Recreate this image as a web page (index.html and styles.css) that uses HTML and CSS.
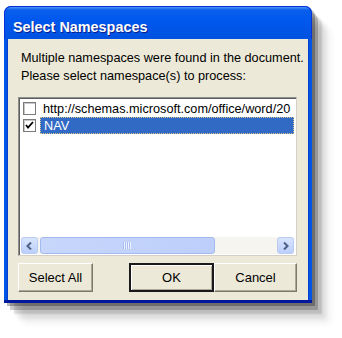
FILE: index.html
```html
<!DOCTYPE html>
<html lang="en">
<head>
<meta charset="UTF-8" />
<title>Select Namespaces</title>
<link rel="stylesheet" href="styles.css">
</head>
<body>

<div class="desk">
  <div class="window">
    <div class="titlebar">Select Namespaces</div>
    <div class="client">
      <p class="message">Multiple namespaces were found in the document.<br>Please select namespace(s) to process:</p>

      <div class="listbox">
        <div class="rows">
          <div class="row">
            <span class="check"></span>
            <span class="label">http://schemas.microsoft.com/office/word/20</span>
          </div>
          <div class="row selected">
            <span class="check checked">
              <svg width="9" height="9" viewBox="0 0 9 9"><path d="M1 4 L3 6.5 L8 1" fill="none" stroke="#000" stroke-width="1.8"/></svg>
            </span>
            <span class="label">NAV</span>
          </div>
        </div>

        <div class="hscroll">
          <div class="sbtn">
            <svg width="7" height="8" viewBox="0 0 7 8"><path d="M5 0.5 L1.5 4 L5 7.5" fill="none" stroke="#4d6185" stroke-width="2"/></svg>
          </div>
          <div class="track">
            <div class="thumb">
              <svg width="9" height="7" viewBox="0 0 9 7"><path d="M0.5 0v7M2.5 0v7M4.5 0v7M6.5 0v7" stroke="#a9bdf0" stroke-width="1"/><path d="M1.5 0v7M3.5 0v7M5.5 0v7M7.5 0v7" stroke="#eef3ff" stroke-width="1"/></svg>
            </div>
          </div>
          <div class="sbtn">
            <svg width="7" height="8" viewBox="0 0 7 8"><path d="M2 0.5 L5.5 4 L2 7.5" fill="none" stroke="#4d6185" stroke-width="2"/></svg>
          </div>
        </div>
      </div>

      <div class="buttons">
        <button class="btn select-all">Select All</button>
        <div class="right">
          <button class="btn ok">OK</button>
          <button class="btn cancel">Cancel</button>
        </div>
      </div>
    </div>
  </div>
</div>

</body>
</html>
```

FILE: styles.css
```css
html, body { margin: 0; background: #fff; font-family: "Liberation Sans", Arial, sans-serif; }
.desk { padding: 6px 0 0 4px; height: 338px; box-sizing: border-box; }

.window {
  width: 308px; height: 297px;
  display: flex; flex-direction: column;
  background: #0055e5; border-radius: 7px 7px 0 0;
  border-bottom: 3px solid #00199c; box-sizing: border-box;
  box-shadow:
    3px 3px 0 0 rgba(0,0,0,0.28),
    6px 7px 0 0 rgba(0,0,0,0.2),
    10px 11px 2px 0 rgba(0,0,0,0.14),
    14px 16px 4px 0 rgba(0,0,0,0.09),
    19px 21px 6px 0 rgba(0,0,0,0.05);
}
.titlebar {
  height: 33px; box-sizing: border-box; padding: 12px 0 0 8px;
  border-radius: 7px 7px 0 0;
  background: linear-gradient(#4a95f8 0, #0a5eea 3px, #0058ee 40%, #0052e0 100%);
  border: 1px solid #0831d9; border-bottom: none;
  color: #fff; font-weight: bold; font-size: 14.4px; line-height: 16px;
  text-shadow: 1px 1px 0 #0a1e8a;
}
.client {
  flex: 1; margin: 0 3px; background: #ece9d8;
  padding: 10px 11px 0 10px; display: flex; flex-direction: column;
  border-left: 1px solid #0a3ccf; border-right: 1px solid #0a3ccf;
}
.message {
  margin: 0 -11px 12px 3px; font-size: 12.7px; line-height: 18px; color: #000; white-space: nowrap;
}

.listbox {
  height: 159px; box-sizing: border-box; background: #fff;
  border: 1px solid #8e8f8f; border-right-color: #d4d0c8; border-bottom-color: #d4d0c8;
  box-shadow: inset 1px 1px 0 #5e5e5e;
  display: flex; flex-direction: column; padding: 2px 2px 1px 2px;
}
.rows { flex: 1; overflow: hidden; }
.row { height: 17px; display: flex; align-items: center; white-space: nowrap; font-size: 13px; }
.check {
  width: 11px; height: 11px; border: 1px solid #7b7b7b; background: #fff;
  margin: 0 4px 0 2px; flex: none; display: flex; align-items: center; justify-content: center;
  box-shadow: inset 1px 1px 0 #c8c8c8;
}
.label { padding: 0 3px; line-height: 16px; font-size: 12.7px; }
.row.selected .label {
  flex: 1; background: #316ac5; color: #fff; border: 1px dotted #d8c890; box-sizing: border-box; height: 17px;
}

.hscroll { height: 17px; display: flex; background: #f6f5ef; gap: 2px; }
.sbtn {
  width: 17px; height: 17px; box-sizing: border-box; border-radius: 3px;
  border: 1px solid #b9cbf3; background: linear-gradient(#d9e5fe, #bccffa);
  display: flex; align-items: center; justify-content: center;
}
.track { flex: 1; display: flex; }
.thumb {
  width: 175px; height: 17px; box-sizing: border-box; border-radius: 3px;
  border: 1px solid #a3baef; background: linear-gradient(90deg, #c7d6fb, #bdcffa);
  display: flex; align-items: center; justify-content: center;
}

.buttons { display: flex; justify-content: space-between; margin-top: 7px; }
.right { display: flex; }
.btn {
  height: 29px; font-family: inherit; font-size: 13px; color: #000;
  background: #ece9d8; padding: 0;
  border: 1px solid; border-color: #fff #7d7a6d #7d7a6d #fff;
  box-shadow: inset -1px -1px 0 #aca899;
}
.select-all { width: 75px; }
.ok { width: 85px; border: 2px solid #1a1a1a; box-shadow: inset 1px 1px 0 #fff, inset -1px -1px 0 #aca899; }
.cancel { width: 83px; }
```
